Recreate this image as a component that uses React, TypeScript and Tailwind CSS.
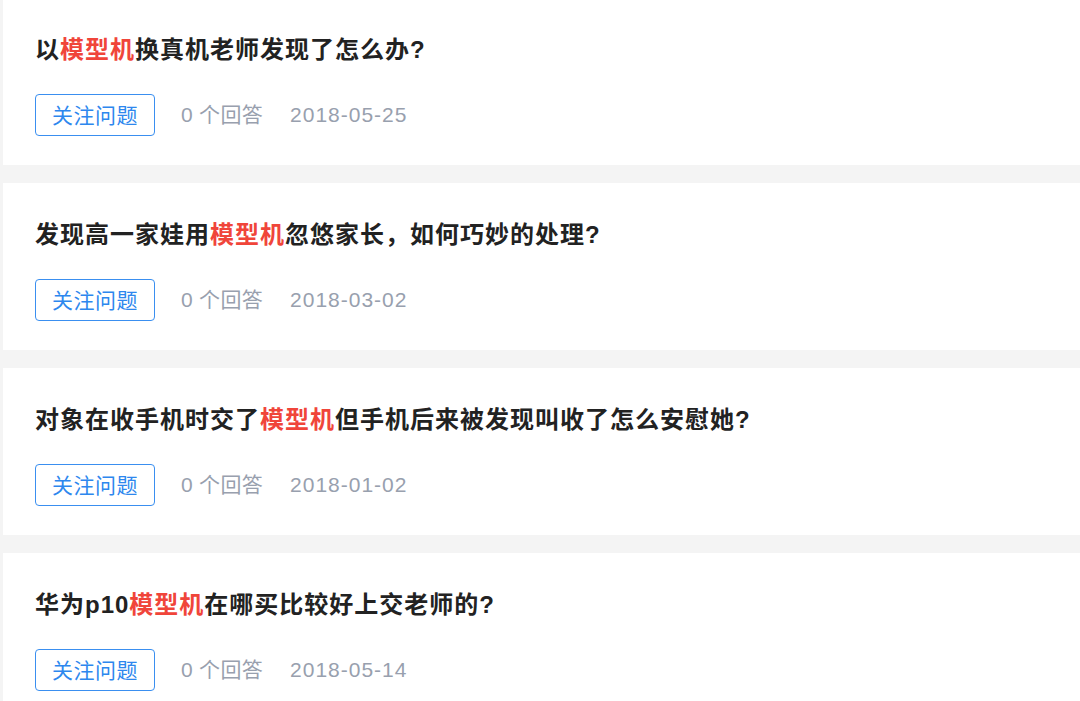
const questions = [
  { pre: "以", post: "换真机老师发现了怎么办?", answers: 0, date: "2018-05-25" },
  { pre: "发现高一家娃用", post: "忽悠家长，如何巧妙的处理?", answers: 0, date: "2018-03-02" },
  { pre: "对象在收手机时交了", post: "但手机后来被发现叫收了怎么安慰她?", answers: 0, date: "2018-01-02" },
  { pre: "华为p10", post: "在哪买比较好上交老师的?", answers: 0, date: "2018-05-14" },
];

const keyword = "模型机";

export default function App() {
  return (
    <div
      className="w-[1080px] h-[701px] overflow-hidden bg-[#f4f4f4]"
      style={{ fontFamily: '"Liberation Sans", "Noto Sans CJK SC", sans-serif' }}
    >
      <div className="-mt-[2px] flex flex-col gap-[18px] pl-[3px]">
        {questions.map((q) => (
          <div key={q.date} className="bg-white pl-[32px] pr-6 pt-[37px] pb-[29px]">
            <h2 className="h-[30px] leading-[30px] text-[24px] font-bold text-[#222222] tracking-[1px]">
              {q.pre}
              <span className="text-[#f0453a]">{keyword}</span>
              {q.post}
            </h2>
            <div className="mt-[29px] flex items-center">
              <button className="w-[120px] h-[42px] rounded-[4px] border-[1.5px] border-[#3a8ff0] text-[21px] tracking-[0.5px] text-[#2d87ee] leading-none">
                关注问题
              </button>
              <span className="ml-[26px] text-[21px] tracking-[0.3px] text-[#98a0ae]">
                {q.answers} 个回答
              </span>
              <span className="ml-[27px] text-[21px] tracking-[1px] text-[#98a0ae]">{q.date}</span>
            </div>
          </div>
        ))}
      </div>
    </div>
  );
}
